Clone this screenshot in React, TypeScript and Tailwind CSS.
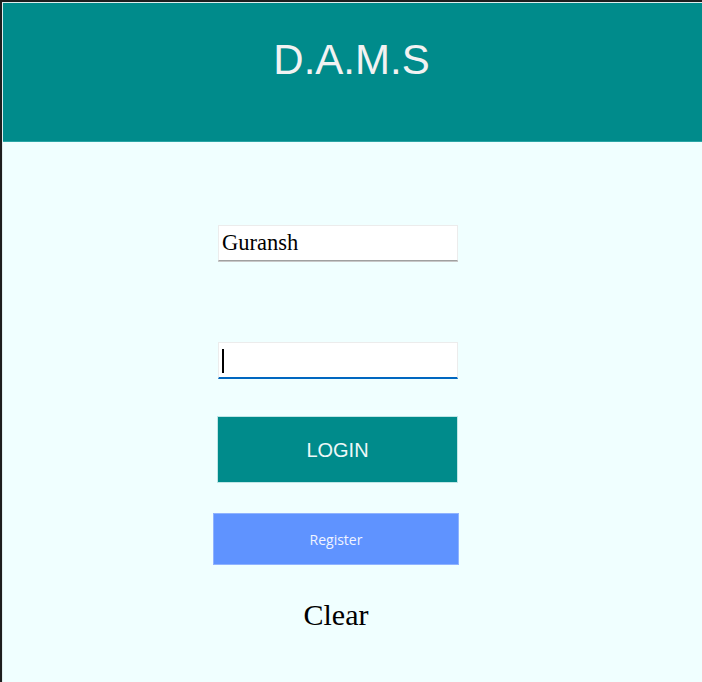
import React, { useState } from "react";

export default function App() {
  const [user, setUser] = useState("Guransh");
  const [pass, setPass] = useState("");

  return (
    <div className="h-[682px] w-[702px] overflow-hidden bg-[#1e1e1e] pl-[2px] pt-[2px]">
      <div className="flex h-full flex-col border-l border-t border-[#dfeeee] bg-[#f0ffff]">
        {/* Header */}
        <div className="flex h-[139px] shrink-0 items-start justify-center border-b border-[#2aa5a5] bg-[#008b8b] pr-[2px] pt-[33px]">
          <h1 className="font-['Liberation_Sans',Arial,sans-serif] text-[42px] leading-[48px] text-[#f2f2f2]">
            D.A.M.S
          </h1>
        </div>

        {/* Form */}
        <div className="ml-[210px] flex w-[246px] flex-col items-start pt-[83px]">
          <input
            value={user}
            onChange={(e) => setUser(e.target.value)}
            className="ml-[5px] h-[36px] w-[240px] border border-[#ececec] border-b-[#a0a0a0] bg-white px-[3px] font-['Liberation_Serif','Times_New_Roman',serif] text-[22.5px] text-black shadow-[0_1px_0_#c8c8c8] outline-none"
          />
          <div className="relative ml-[5px] mt-[81px] h-[37px] w-[240px] border border-b-[2px] border-[#ececec] border-b-[#0067c0] bg-white">
            <input
              type="password"
              value={pass}
              onChange={(e) => setPass(e.target.value)}
              className="h-full w-full bg-transparent px-[3px] text-[20px] outline-none"
            />
            <span className="absolute left-[3px] top-[6px] h-[24px] w-[2px] bg-black" />
          </div>
          <button className="ml-[4px] mt-[37px] h-[67px] w-[241px] border border-[#bfe6e6] bg-[#008b8b] font-['Liberation_Sans',Arial,sans-serif] text-[20px] text-[#eef8f8]">
            LOGIN
          </button>
          <button className="mt-[30px] h-[52px] w-[246px] border border-[#8fb3ff] bg-[#5f93ff] font-['Open_Sans','Noto_Sans',sans-serif] text-[14px] text-[#f0f4ff]">
            Register
          </button>
          <button className="mt-[35px] w-full text-center font-['Liberation_Serif','Times_New_Roman',serif] text-[30px] leading-[30px] text-black">
            Clear
          </button>
        </div>
      </div>
    </div>
  );
}
